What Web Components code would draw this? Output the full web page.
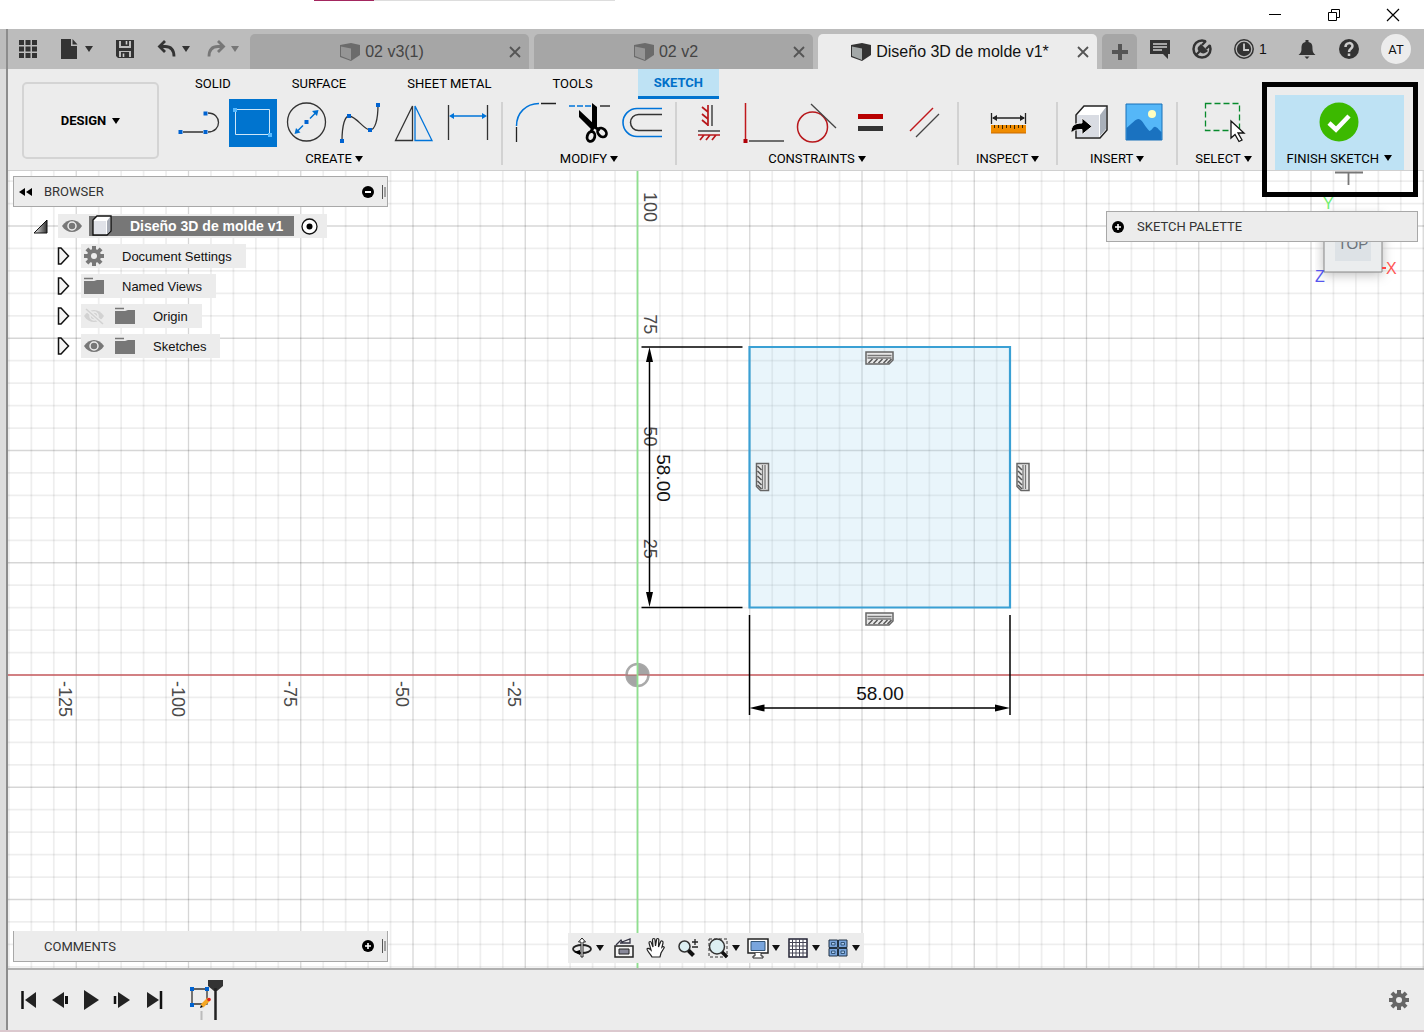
<!DOCTYPE html>
<html lang="en">
<head>
<meta charset="utf-8">
<title>Diseño 3D de molde v1</title>
<style>
    html, body { height: 100%; }
    body {
        margin: 0;
        font-family: "Liberation Sans", Arial, sans-serif;
        font-size: 13px;
        color: #111;
        overflow: hidden;
    }
</style>
</head>
<body>
<cad-app></cad-app>

<script>
const gear = c => `<g transform="translate(10 10)" fill="${c}">${[0, 45, 90, 135].map(a => `<rect x="-2" y="-10" width="4" height="20" transform="rotate(${a})"/>`).join("")}<circle r="7"/><circle r="3" fill="#ececec"/></g>`;
const sq = (x, y, c = "#0063d1") => `<rect x="${x - 2}" y="${y - 2}" width="4" height="4" fill="${c}"/>`;

// name: [viewBox width, viewBox height, markup]
const icons = {
    minimize: [12, 12, `<path d="M0 5.5h12" stroke="#000"/>`],
    restore: [12, 12, `<path d="M.5 3.5h8v8h-8zM3.5 3V.5h8v8H9" fill="none" stroke="#000"/>`],
    exit: [12, 12, `<path d="M0 0l12 12M12 0L0 12" stroke="#000" stroke-width="1.2"/>`],
    caret: [8, 6, `<path d="M0 0h8L4 6z" fill="currentColor"/>`],
    close: [12, 12, `<path d="M1 1l10 10M11 1L1 11" stroke="currentColor" stroke-width="1.8"/>`],
    apps: [20, 20, `<path fill="#333" d="M1 1h5v5H1zM7.5 1h5v5h-5zM14 1h5v5h-5zM1 7.500h5v5H1zM7.5 7.500h5v5h-5zM14 7.500h5v5h-5zM1 14h5v5H1zM7.5 14h5v5h-5zM14 14h5v5h-5z"/>`],
    file: [20, 20, `<path fill="#333" d="M1 0h10v7h6v13H1zM12.5 0l5 5.5h-5z"/>`],
    save: [20, 20, `<path fill="#333" fill-rule="evenodd" d="M1 1h18v18H3l-2-2zM4 2v7h12V2zM4 12v6h12v-6z"/><path fill="#333" d="M6 1h8v6H6zM6 13h8v6H6z"/><path stroke="#ccc" stroke-width="1.6" d="M11.500 2v3.500M8.500 14.500v3.500"/>`],
    undo: [20, 20, `<path d="M8 2L2.500 7.500 8 13M3 7.500h5c6 0 9 3 9 10" fill="none" stroke="#333" stroke-width="2.800"/>`],
    redo: [20, 20, `<path d="M12 2l5.500 5.500L12 13M17 7.500h-5c-6 0-9 3-9 10" fill="none" stroke="#777" stroke-width="2.800"/>`],
    doc: [20, 20, `<path d="M0 3l11-2 9 2v10l-9 6-11-4z" fill="currentColor"/><path d="M1 4.500l10 2V18L1 14z" fill="var(--face, #959595)"/>`],
    plus: [16, 16, `<path d="M8 0v16M0 8h16" stroke="#555" stroke-width="4"/>`],
    chat: [20, 20, `<path fill="#333" d="M0 1h20v14h-2v5l-5-5H0z"/><path d="M3 5h14M3 8h14M3 11h9" stroke="#ccc" stroke-width="1.5"/>`],
    plug: [20, 20, `<circle cx="10" cy="10" r="8.500" fill="none" stroke="#333" stroke-width="2.500"/><path d="M11 4l5-4 4 4-4 5z" fill="#bcbcbc"/><path d="M6 8l3-3 7 7c-3 3-6 3-8 1-2-1-3-3-2-5z" fill="#333"/><path d="M10 6l4-4M14 10l4-4M8 12l-4 4" stroke="#333" stroke-width="2.200"/>`],
    clock: [20, 20, `<circle cx="10" cy="10" r="9.200" fill="none" stroke="#333" stroke-width="1.500"/><circle cx="10" cy="10" r="7.200" fill="#333"/><path d="M10 4.500V11h5" fill="none" stroke="#ccc" stroke-width="1.800"/>`],
    bell: [20, 20, `<path fill="#333" d="M8.500 1h3v2c4 1 4 4 4 7s1 4 3 6H1.500c2-2 3-3 3-6s0-6 4-7zM7.500 17.500h5l-2.500 2.500z"/>`],
    help: [20, 20, `<circle cx="10" cy="10" r="10" fill="#333"/><path d="M6.500 8c0-5 7-5 7-1 0 3-3.500 2.500-3.500 6M10 14.500v2.500" fill="none" stroke="#ccc" stroke-width="2.500"/>`],

    line: [48, 48, `<path d="M8 33h20M33 33c14 0 14-19 0-19" fill="none" stroke="#333" stroke-width="1.300"/>${sq(5.5, 33)}${sq(30.5, 33)}${sq(30.5, 14.5)}`],
    rectangle: [48, 48, `<path fill="#0074cf" d="M0 0h48v48H0z"/><path d="M6.500 10.500h34v25h-34z" fill="none" stroke="#cfe6f7"/>${sq(6, 11, "#55b9ff")}${sq(41, 36, "#55b9ff")}`],
    circle: [48, 48, `<circle cx="23.500" cy="23" r="19" fill="none" stroke="#333" stroke-width="1.300"/><path d="M14 32.500l6-6M27 19.500l6-6" stroke="#0070d1" stroke-width="1.500"/><path d="M11.500 35l1.500-6 4.500 4.500zM35.500 11l-1.500 6-5-5z" fill="#0070d1"/>${sq(23.5, 23)}`],
    spline: [48, 48, `<path d="M5 42c0-16 3-25 7-25 7 0 15 14 21 14 5 0 8-10 8-25" fill="none" stroke="#333" stroke-width="1.300"/>${sq(5, 42)}${sq(12, 17)}${sq(33, 31)}${sq(41, 6)}`],
    mirror: [48, 48, `<path d="M21.500 7v34.500h-17z" fill="none" stroke="#333" stroke-width="1.300"/><path d="M24 7v34.500h17z" fill="none" stroke="#0074d9" stroke-width="1.300"/>`],
    dimension: [48, 48, `<path d="M3.500 6v35M42.500 6v35" stroke="#333" stroke-width="1.300"/><path d="M7 17h32" stroke="#0074d9" stroke-width="1.500"/><path d="M4 17l5-3v6zM42 17l-5-3v6z" fill="#0074d9"/>`],
    fillet: [48, 48, `<path d="M5.500 43V28M30 4.500h15" stroke="#222" stroke-width="1.300"/><path d="M5.500 27C5.500 14 15 4.500 28 4.500" fill="none" stroke="#0074d9" stroke-width="1.500"/>`],
    trim: [48, 48, `<path d="M4 7h22" stroke="#0074d9" stroke-width="1.500" stroke-dasharray="6 2"/><path d="M35 7h10" stroke="#333" stroke-width="1.500"/><path d="M14 11l16 15-2 6L14 18zM27 4l5 4v20l-5 2z"/><path d="M28 28l-2 5M29 28l6 3" stroke="#000" stroke-width="3"/><g fill="none" stroke="#000" stroke-width="2.800"><ellipse cx="26" cy="37.500" rx="3.800" ry="5" transform="rotate(15 26 37.500)"/><ellipse cx="37" cy="33.500" rx="3.800" ry="5" transform="rotate(-45 37 33.500)"/></g>`],
    offset: [48, 48, `<path d="M43 9.500H18a14 14 0 0 0 0 28h25" fill="none" stroke="#0074d9" stroke-width="1.600"/><path d="M43 15.500H19.500a8 8 0 0 0 0 16H43" fill="none" stroke="#333" stroke-width="1.500"/>`],
    horizVert: [48, 48, `<path d="M27 6v21M13 32h22" stroke="#444" stroke-width="1.500"/><path d="M23 6v21M23 13l-6-5M23 20l-6-5M23 26l-6-5M13 36h22M15 41l4-5M21 41l4-5M27 41l4-5" stroke="#b8181c" stroke-width="1.700"/>`],
    perpendicular: [48, 48, `<path d="M6.500 4v36" stroke="#c0181c" stroke-width="1.500"/><path d="M10 42h35" stroke="#444" stroke-width="1.300"/>${sq(6.5, 42, "#b00008")}`],
    tangent: [48, 48, `<circle cx="19.500" cy="28" r="15" fill="none" stroke="#b8181c" stroke-width="1.500"/><path d="M18 5l25 24" stroke="#444" stroke-width="1.300"/>`],
    equal: [48, 48, `<path d="M11 15h25v5H11z" fill="#b80000"/><path d="M11 27h25v5H11z" fill="#333"/>`],
    parallel: [48, 48, `<path d="M9 32L32 9" stroke="#c0181c" stroke-width="1.500"/><path d="M15 38l23-23" stroke="#444" stroke-width="1.300"/>`],
    measure: [48, 48, `<path d="M7.500 14v11M41.500 14v11M9 19h31" stroke="#222" stroke-width="1.300"/><path d="M8 19l5-3v6zM41 19l-5-3v6z" fill="#222"/><path d="M7 26h35v8H7z" fill="#f08c00"/><path d="M7 34h35" stroke="#c96a00"/><path d="M10.500 26v3M14.500 26v3M18.500 26v4M22.500 26v3M26.500 26v3M30.500 26v4M34.500 26v3M38.500 26v3" stroke="#3a2500"/>`],
    insert: [48, 48, `<path d="M10 16l8-9h23v24l-7 8H10z" fill="#fff" stroke="#222" stroke-width="1.500"/><path d="M11 16h22v22H11z" fill="#d9dce3"/><path d="M34 16l6-8v22l-6 7z" fill="#a9b0ba"/><path d="M5 34c0-7 3-10 11-10v-5l10 8.500-10 8v-5c-6 0-8 1-11 3.500z" stroke="#eee" stroke-width="1"/>`],
    image: [48, 48, `<path d="M6 5h36v36H6z" fill="#55b7f8" stroke="#1870b8"/><circle cx="32" cy="15" r="4" fill="#ffffc0"/><path d="M6.500 29c6-5 9-9 12-9 4 0 7 9 11 12 3-1 4-5 6-4 2 0 4 4 6 5v8h-35z" fill="#1a72c0"/>`],
    select: [48, 48, `<path d="M6.500 4.500h34v27h-34z" fill="none" stroke="#078a2c" stroke-width="1.300" stroke-dasharray="6 3"/><path d="M32 22v17l4-3.500 4 7 3-1.500-4-7h6z" fill="#fff" stroke="#111" stroke-width="1.300"/>`],
    finish: [48, 48, `<circle cx="24" cy="24" r="19.500" fill="#3cb900"/><path d="M14 25l7 6.500L34 18" fill="none" stroke="#fff" stroke-width="4.500"/>`],

    rewind: [13, 8, `<path d="M6 0v8L0 4zM13 0v8L7 4z"/>`],
    minusDot: [12, 12, `<circle cx="6" cy="6" r="6"/><path d="M3 6h6" stroke="#fff" stroke-width="2"/>`],
    plusDot: [12, 12, `<circle cx="6" cy="6" r="6"/><path d="M3 6h6M6 3v6" stroke="#fff" stroke-width="1.600"/>`],
    grip: [4, 14, `<path d="M.5 0v14M3 2v10" stroke="#555"/>`],
    open: [15, 15, `<defs><linearGradient id="g"><stop offset="0" stop-color="#eee"/><stop offset="1" stop-color="#333"/></linearGradient></defs><path d="M1 14L14 1v13z" fill="url(#g)" stroke="#111"/>`],
    closed: [13, 18, `<path d="M1.500 1H4l7.500 8L4 17H1.500z" fill="#f4f4f4" stroke="#111" stroke-width="1.500"/>`],
    eye: [20, 20, `<path d="M0 10c5-8 15-8 20 0-5 8-15 8-20 0z" fill="#777"/><circle cx="10" cy="10" r="4" fill="none" stroke="#ececec" stroke-width="1.500"/>`],
    eyeOff: [20, 20, `<path d="M0 10c5-8 15-8 20 0-5 8-15 8-20 0z" fill="#d2d2d2"/><circle cx="10" cy="10" r="4" fill="none" stroke="#ececec" stroke-width="1.500"/><path d="M2 3l17 15" stroke="#ececec" stroke-width="4"/><path d="M2 3l17 15" stroke="#d2d2d2" stroke-width="1.600"/>`],
    body: [20, 20, `<path d="M1 4l4-4h14v15l-4 4H1z" fill="#fff" stroke="#111" stroke-width="1.400"/><path d="M2 5h12v13H2z" fill="#e0e2e8"/><path d="M15 5l3-4v14l-3 3z" fill="#a6abb5"/>`],
    gear: [20, 20, gear("#777")],
    gearDark: [20, 20, gear("#666")],
    folder: [20, 20, `<path d="M0 5h10l3-1h7v14H0z" fill="#777"/><path d="M0 2.500h9" stroke="#777" stroke-width="1.500"/>`],
    target: [17, 17, `<circle cx="8.500" cy="8.500" r="7.500" fill="#fff" stroke="#111" stroke-width="1.300"/><circle cx="8.500" cy="8.500" r="3"/>`],

    orbit: [20, 20, `<ellipse cx="10" cy="11" rx="9" ry="4" fill="none" stroke="#222" stroke-width="1.800"/><path d="M10 0L6.500 4H9v15h2V4h2.500z" fill="#fff" stroke="#222"/><path d="M2 14l6-2v5z"/>`],
    look: [20, 20, `<path d="M1 8h18v11H1z" fill="#f4f4f4" stroke="#222" stroke-width="1.500"/><path d="M5 11h10v5H5z" fill="#889" stroke="#222"/><path d="M2 7l5-5 1 2 8-3v4H6" fill="none" stroke="#334" stroke-width="1.300"/>`],
    pan: [20, 20, `<path d="M6 19c-2-4-5-6-5-8 0-1 2-1 4 1L3 5c0-2 2-2 2.500 0L7 9 6.500 2c0-2 2.500-2 2.500 0l.5 6 1-6c0-2 2.500-2 2.300 0L12.500 9l2-5c.5-2 3-1 2.500 1l-1 4c1-1 3 0 2 1l-3 5-1 4z" fill="#fff" stroke="#222" stroke-width="1.200"/>`],
    zoom: [20, 20, `<circle cx="6.500" cy="8.500" r="5.500" fill="#dceff2" stroke="#333" stroke-width="1.500"/><path d="M10.500 12.500l5 5" stroke="#111" stroke-width="4"/><path d="M14 4h6M17 1v6M14 9h6" stroke="#222" stroke-width="1.300"/>`],
    fit: [20, 20, `<path d="M1 1h18v18H1z" fill="none" stroke="#333" stroke-dasharray="3 2"/><circle cx="9" cy="8.500" r="7.500" fill="#dceff2" stroke="#333" stroke-width="1.500"/><path d="M14 14l5 5" stroke="#111" stroke-width="3.500"/>`],
    display: [20, 20, `<path d="M0 1h20v14H0z" fill="#fff" stroke="#222" stroke-width="1.500"/><path d="M3 3.500h14v9H3z" fill="#79a5dd" stroke="#357"/><path d="M7 15v3H5v2h10v-2h-2v-3" fill="#fff" stroke="#222"/>`],
    gridset: [20, 20, `<path d="M1 1h18v18H1z" fill="#fff" stroke="#223" stroke-width="1.500"/><path d="M4.500 1v18M8 1v18M11.500 1v18M15 1v18M1 4.500h18M1 8h18M1 11.500h18M1 15h18" stroke="#445"/>`],
    views: [20, 20, `<path d="M1 2h8.500v7.500H1zM10.500 2H19v7.500h-8.500zM1 10.500h8.500V18H1zM10.500 10.500H19V18h-8.500z" fill="#79a5dd" stroke="#234"/><path d="M3.500 4.500h3.500v2.500H3.500zM13 4.500h3.500v2.500H13zM3.500 13h3.500v2.500H3.500zM13 13h3.500v2.500H13z" fill="#a9c8ee" stroke="#357"/>`],

    first: [20, 20, `<path d="M3.500 1v18" stroke="#111" stroke-width="2.500"/><path d="M17 2v16L6 10z" fill="#222"/>`],
    back: [20, 20, `<path d="M14 2v16L2 10z" fill="#222"/><path d="M16.500 6v8" stroke="#111" stroke-width="3"/>`],
    play: [20, 20, `<path d="M3 0v20l15-10z" fill="#222"/>`],
    forward: [20, 20, `<path d="M6 2v16l12-8z" fill="#222"/><path d="M3 6v8" stroke="#111" stroke-width="2.500"/>`],
    last: [20, 20, `<path d="M4 2v16l12-8z" fill="#222"/><path d="M18 1v18" stroke="#111" stroke-width="2.500"/>`],
    feature: [32, 44, `<path d="M6 11h15v15H6z" fill="none" stroke="#333" stroke-width="1.300"/>${sq(6, 11)}${sq(21, 11)}${sq(6, 27)}<path d="M16 28l7-7" stroke="#f5a623" stroke-width="4"/><path d="M14 30l3-1-2-2z"/><circle cx="23" cy="21.500" r="1.800" fill="#e02020"/><path d="M15.500 33v9" stroke="#bbb" stroke-width="2"/><path d="M22 2h15v6l-6 5h-3l-6-5z" fill="#333"/><path d="M29.500 10v32" stroke="#222" stroke-width="2.500"/>`],
};

// shared base: clones the class's template into an open shadow root
class CadElement extends HTMLElement {
    constructor() {
        super();
        this.attachShadow({mode: "open"});
    }
    connectedCallback() {
        const template = document.createElement("template");
        template.innerHTML = `<style>
            button { font: inherit; color: inherit; background: none; border: 0; padding: 0; margin: 0; display: flex; align-items: center; }
            ${this.constructor.css}</style>${this.render()}`;
        this.shadowRoot.replaceChildren(template.content.cloneNode(true));
    }
    attr(name, fallback = "") { return this.getAttribute(name) || fallback; }
}

class CadIcon extends CadElement {
    static css = `:host { display: inline-flex; flex: none; } svg { display: block; overflow: visible; }`;
    render() {
        const [w, h, body] = icons[this.attr("name")];
        return `<svg width="${w}" height="${h}" viewBox="0 0 ${w} ${h}" aria-hidden="true">${body}</svg>`;
    }
}
customElements.define("cad-icon", CadIcon);

class IconButton extends CadElement {
    static css = `
        :host { display: inline-flex; flex: none; }
        button { gap: var(--caret-gap, 5px); }
        :host([faded]) { color: #777; }
    `;
    render() {
        return `<button aria-label="${this.attr("label")}"><cad-icon name="${this.attr("icon")}"></cad-icon>${this.hasAttribute("menu") ? `<cad-icon name="caret"></cad-icon>` : ""}<slot></slot></button>`;
    }
}
customElements.define("icon-button", IconButton);

class WindowBar extends CadElement {
    static css = `
        :host { display: flex; justify-content: flex-end; align-items: center; height: 29px; background: #fff; position: relative; padding-right: 25px; gap: 47px; box-sizing: border-box; }
        .progress { position: absolute; left: 314px; top: 0; width: 301px; height: 1px; background: linear-gradient(to right, #a3265e 60px, #ddd 60px); }
    `;
    render() {
        return `<div class="progress"></div>
            <icon-button label="Minimize" icon="minimize"></icon-button>
            <icon-button label="Restore" icon="restore"></icon-button>
            <icon-button label="Close window" icon="exit"></icon-button>`;
    }
}
customElements.define("window-bar", WindowBar);

class DocumentTab extends CadElement {
    static css = `
        :host { display: flex; flex: 1; align-items: center; height: 35px; padding: 0 8px 0 5px; box-sizing: border-box; border-radius: 5px 5px 0 0; background: #a6a6a6; color: #444; min-width: 0; }
        :host([active]) { background: #ececec; color: #111; --face: #a3a8a8; }
        cad-icon { color: #6b6b6b; }
        :host([active]) cad-icon { color: #333; }
        .name { flex: 1; justify-content: center; gap: 5px; font-size: 16px; line-height: 20px; white-space: nowrap; }
        icon-button { color: #555; }
    `;
    render() {
        return `<button class="name"><cad-icon name="doc"></cad-icon><slot></slot></button>
            <icon-button label="Close tab" icon="close"></icon-button>`;
    }
}
customElements.define("document-tab", DocumentTab);

class AppBar extends CadElement {
    static css = `
        :host { display: flex; align-items: center; height: 40px; background: #bcbcbc; }
        .quick { display: flex; gap: 22px; padding: 0 11px 0 10px; color: #333; }
        .history { display: flex; gap: 16px; }
        .tabs { display: flex; flex: 1; gap: 5px; align-self: flex-end; min-width: 0; }
        .add { width: 35px; height: 35px; justify-content: center; background: #a6a6a6; border-radius: 5px 5px 0 0; }
        .status { display: flex; align-items: center; gap: 22px; padding: 0 13px; }
        .jobs { width: 41px; font-size: 14px; }
        .avatar { width: 30px; height: 30px; border-radius: 50%; background: #ececec; justify-content: center; font: 13px Roboto, sans-serif; }
    `;
    render() {
        return `<div class="quick">
                <icon-button label="Data panel" icon="apps"></icon-button>
                <icon-button label="File" icon="file" menu></icon-button>
                <icon-button label="Save" icon="save"></icon-button>
                <div class="history">
                    <icon-button label="Undo" icon="undo" menu></icon-button>
                    <icon-button label="Redo" icon="redo" menu faded></icon-button>
                </div>
            </div>
            <div class="tabs">
                <document-tab>02 v3(1)</document-tab>
                <document-tab>02 v2</document-tab>
                <document-tab active>Diseño 3D de molde v1*</document-tab>
                <button class="add" aria-label="New tab"><cad-icon name="plus"></cad-icon></button>
            </div>
            <div class="status">
                <icon-button label="Comments" icon="chat"></icon-button>
                <icon-button label="Extensions" icon="plug"></icon-button>
                <icon-button class="jobs" label="Job status" icon="clock">1</icon-button>
                <icon-button label="Notifications" icon="bell"></icon-button>
                <icon-button label="Help" icon="help"></icon-button>
                <button class="avatar">AT</button>
            </div>`;
    }
}
customElements.define("app-bar", AppBar);

class ToolGroup extends CadElement {
    static css = `
        :host { display: flex; flex-direction: column; align-items: center; padding: 0 5px; position: relative; }
        :host([roomy]) { padding: 0 17px; }
        :host(:not([last]))::after { content: ""; position: absolute; right: -2px; top: 3px; bottom: 6px; width: 2px; background: #d2d2d2; }
        :host(:not([last])) { margin-right: 2px; }
        .tools { display: flex; }
        .tools icon-button { width: 54px; justify-content: center; }
        .label { gap: 3px; height: 24px; line-height: 24px; white-space: nowrap; }
    `;
    render() {
        const tools = this.attr("tools").split(" ");
        return `<div class="tools">${tools.map(t => `<icon-button icon="${t}" label="${t}"></icon-button>`).join("")}</div>
            <button class="label"><slot></slot><cad-icon name="caret"></cad-icon></button>`;
    }
}
customElements.define("tool-group", ToolGroup);

class RibbonBar extends CadElement {
    static css = `
        :host { display: flex; height: 102px; background: #ececec; font-family: Roboto, sans-serif; color: #000; border-bottom: 1px solid #d0d0d0; box-sizing: border-box; }
        .workspace { width: 137px; height: 77px; margin: 13px 8px 0 14px; border: 2px solid #d4d4d4; border-radius: 5px; justify-content: center; gap: 6px; font-weight: bold; box-sizing: border-box; }
        .middle { flex: 1; }
        .tabs { display: flex; gap: 29px; padding-left: 12px; height: 30px; }
        .tabs button { padding: 0 16px; height: 28px; white-space: nowrap; }
        .tabs .active { background: #bee2f4; color: #0070c9; font-weight: bold; border-bottom: 3px solid #0074cf; height: 30px; }
        .groups { display: flex; }
        .finish { position: relative; align-self: flex-end; flex-direction: column; margin-right: 20px; padding: 3px 12px 0; background: #bee2f4; z-index: 3; }
        .finish .label { display: flex; align-items: center; gap: 5px; height: 24px; white-space: nowrap; }
        .callout { position: absolute; inset: -13px -14px -27px -13px; border: 5px solid #000; pointer-events: none; }
    `;
    render() {
        return `<button class="workspace">DESIGN <cad-icon name="caret"></cad-icon></button>
            <div class="middle">
                <div class="tabs">
                    <button>SOLID</button>
                    <button>SURFACE</button>
                    <button>SHEET METAL</button>
                    <button>TOOLS</button>
                    <button class="active">SKETCH</button>
                </div>
                <div class="groups">
                    <tool-group tools="line rectangle circle spline mirror dimension">CREATE</tool-group>
                    <tool-group tools="fillet trim offset">MODIFY</tool-group>
                    <tool-group tools="horizVert perpendicular tangent equal parallel">CONSTRAINTS</tool-group>
                    <tool-group tools="measure" roomy>INSPECT</tool-group>
                    <tool-group tools="insert image">INSERT</tool-group>
                    <tool-group tools="select" roomy last>SELECT</tool-group>
                </div>
            </div>
            <button class="finish"><cad-icon name="finish"></cad-icon><span class="label">FINISH SKETCH <cad-icon name="caret"></cad-icon></span><span class="callout"></span></button>`;
    }
}
customElements.define("ribbon-bar", RibbonBar);

class PanelHeader extends CadElement {
    static css = `
        :host { display: flex; align-items: center; height: 31px; box-sizing: border-box; background: #ececec; border: 1px solid #a8a8a8; padding: 0 1px 0 5px; font-family: Roboto, sans-serif; color: #333; }
        .lead { display: flex; width: 25px; }
        .title { flex: 1; }
        .end { display: flex; align-items: center; gap: 8px; }
    `;
    render() {
        const toggle = `<icon-button label="Toggle" icon="${this.attr("toggle")}"></icon-button>`;
        if (this.hasAttribute("leading")) {
            return `<div class="lead">${toggle}</div><span class="title"><slot></slot></span>`;
        }
        return `<div class="lead">${this.hasAttribute("collapsible") ? `<icon-button label="Collapse" icon="rewind"></icon-button>` : ""}</div>
            <span class="title"><slot></slot></span>
            <div class="end">${toggle}<cad-icon name="grip"></cad-icon></div>`;
    }
}
customElements.define("panel-header", PanelHeader);

class TreeRow extends CadElement {
    static css = `
        :host { display: flex; align-items: center; height: 24px; padding-left: 44px; gap: 11px; }
        :host([root]) { padding-left: 20px; gap: 10px; }
        .box { display: flex; align-items: center; height: 24px; background: #ececec; padding: 0 14px 0 3px; gap: 11px; }
        .text { padding-left: 7px; }
        :host([root]) .box { padding: 0 9px 0 4px; gap: 7px; }
        .name { display: flex; align-items: center; height: 20px; background: #777; color: #fff; font-size: 14px; font-weight: bold; padding: 0 11px 0 3px; gap: 18px; }
    `;
    render() {
        if (this.hasAttribute("root")) {
            return `<icon-button label="Collapse" icon="open"></icon-button>
                <div class="box"><icon-button label="Visibility" icon="eye"></icon-button><span class="name"><cad-icon name="body"></cad-icon><slot></slot></span><icon-button label="Activate" icon="target"></icon-button></div>`;
        }
        return `<icon-button label="Expand" icon="closed"></icon-button>
            <div class="box">${this.attr("icons").split(" ").map(i => `<cad-icon name="${i}"></cad-icon>`).join("")}<span class="text"><slot></slot></span></div>`;
    }
}
customElements.define("tree-row", TreeRow);

class SketchCanvas extends CadElement {
    static css = `
        :host { display: block; }
        svg { display: block; width: 100%; height: 100%; }
        text { font: 19px "Liberation Sans", Arial, sans-serif; fill: #111; }
        .tick { font-size: 18px; fill: #4a4a4a; }
        .minor { stroke: #000; stroke-opacity: .065; stroke-width: 1.8; }
        .major { stroke: #000; stroke-opacity: .16; stroke-width: 1.3; }
    `;
    render() {
        // one grid cell is 5 mm
        const step = 22.45;
        let grid = "";
        for (let i = -28; i <= 120; i++) {
            grid += `<path class="${i % 5 ? "minor" : "major"}" d="M${i * step} -504V2000"/>`;
        }
        for (let i = -22; i <= 80; i++) {
            grid += `<path class="${i % 5 ? "minor" : "major"}" d="M-640 ${i * step}H3000"/>`;
        }
        const xTicks = [-125, -100, -75, -50, -25].map(v => `<text class="tick" transform="translate(${v / 5 * step - 17} 6) rotate(90)">${v}</text>`).join("");
        const yTicks = [25, 50, 75, 100].map(v => `<text class="tick" text-anchor="end" transform="translate(6 ${-v / 5 * step - 4}) rotate(90)">${v}</text>`).join("");
        return `<svg>
            <defs><g id="fixed">
                <path d="M-13.500-6h27v8l-4 4h-23z" fill="#e8e8e8" stroke="#666" stroke-width="1.500"/>
                <path d="M-12-2.500h24M-12 0h24" stroke="#777" stroke-width="1.300"/>
                <path d="M-11 5l4-4M-6 5l4-4M-1 5l4-4M4 5l4-4M8 5l4-4" stroke="#555" stroke-width="1.500"/>
            </g></defs>
            <g transform="translate(629.5 504)">
                ${grid}
                <path d="M-640 0H3000" stroke="#cc5f63" stroke-width="1.500"/>
                <circle r="11" fill="#fff" stroke="#aaa" stroke-width="2.500"/>
                <path d="M0 0V-11A11 11 0 0 1 11 0zM0 0V11A11 11 0 0 1-11 0z" fill="#a5a5a5"/>
                <path d="M-12 0h24" stroke="#b05a5a"/>
                <path d="M0-504V2000" stroke="#8fe08f" stroke-width="1.800"/>
                <path d="M112-328h260.500v260.500H112z" fill="#9bd3ee" fill-opacity=".22" stroke="#3aa0d4" stroke-width="2.200"/>
                <use href="#fixed" x="242" y="-317"/><use href="#fixed" x="242" y="-56"/>
                <use href="#fixed" transform="translate(125 -198) rotate(90)"/><use href="#fixed" transform="translate(385.500 -198) rotate(90)"/>
                ${xTicks}${yTicks}
                <path d="M4-328h101M4-67.500h101M12-320v245M112-60V40M372.500-60V40M120 33h245" stroke="#000" stroke-width="1.500"/>
                <path d="M12-328l-3.500 15h7zM12-68l-3.500-15h7zM112 33l15-3.500v7zM372.500 33l-15-3.500v7z"/>
                <text x="242.500" y="25" text-anchor="middle">58.00</text>
                <text text-anchor="middle" transform="translate(19 -197) rotate(90)">58.00</text>
            </g></svg>`;
    }
}
customElements.define("sketch-canvas", SketchCanvas);

class ViewCube extends CadElement {
    static css = `:host { display: block; } svg { display: block; } text { font: 16px "Liberation Sans", Arial, sans-serif; }`;
    render() {
        return `<svg width="100" height="120">
            <path d="M20 1.500h28M33.500 1v13" stroke="#777" stroke-width="1.800"/>
            <g style="filter: drop-shadow(0 2px 6px #bbb)"><path d="M9 44h58v57H9z" fill="#ebedee" stroke="#888"/></g>
            <path d="M20 55h36v35H20z" fill="#dde2e6"/>
            <text x="38" y="78" text-anchor="middle" style="font-size: 15px" fill="#6b737b">TOP</text>
            <text x="8" y="38" fill="#6fee6f">Y</text>
            <text x="71" y="103" fill="#f55">X</text><path d="M67 97h4" stroke="#f44" stroke-width="2"/>
            <text x="0" y="111" fill="#55e">Z</text>
        </svg>`;
    }
}
customElements.define("view-cube", ViewCube);

class NavBar extends CadElement {
    static css = `
        :host { display: flex; gap: 8px; align-items: center; height: 30px; padding: 0 4px; background: #ececec; --caret-gap: 4px; }
        icon-button:not([menu]) { padding: 0 2px; }
    `;
    render() {
        return `<icon-button label="Orbit" icon="orbit" menu></icon-button>
            <icon-button label="Look at" icon="look"></icon-button>
            <icon-button label="Pan" icon="pan"></icon-button>
            <icon-button label="Zoom" icon="zoom"></icon-button>
            <icon-button label="Fit" icon="fit" menu></icon-button>
            <icon-button label="Display settings" icon="display" menu></icon-button>
            <icon-button label="Grid and snaps" icon="gridset" menu></icon-button>
            <icon-button label="Viewports" icon="views" menu></icon-button>`;
    }
}
customElements.define("nav-bar", NavBar);

class TimelineBar extends CadElement {
    static css = `
        :host { display: flex; align-items: center; height: 62px; box-sizing: border-box; background: #ececec; border-top: 2px solid #b0b0b0; padding: 0 15px 0 11px; }
        .player { display: flex; gap: 11px; }
        .feature { flex: 1; display: flex; padding-left: 23px; }
    `;
    render() {
        return `<div class="player">
                <icon-button label="Go to start" icon="first"></icon-button>
                <icon-button label="Step back" icon="back"></icon-button>
                <icon-button label="Play" icon="play"></icon-button>
                <icon-button label="Step forward" icon="forward"></icon-button>
                <icon-button label="Go to end" icon="last"></icon-button>
            </div>
            <div class="feature"><icon-button label="Sketch 1" icon="feature"></icon-button></div>
            <icon-button label="Timeline settings" icon="gearDark"></icon-button>`;
    }
}
customElements.define("timeline-bar", TimelineBar);

class CadApp extends CadElement {
    static css = `
        :host { display: flex; flex-direction: column; height: 100vh; }
        .frame { display: flex; flex: 1; min-height: 0; }
        .gutter { width: 6px; background: linear-gradient(#bcbcbc 40px, #dcdcdc 40px); }
        .main { display: flex; flex-direction: column; flex: 1; min-width: 0; border-left: 2px solid #8c8c8c; }
        ribbon-bar { position: relative; z-index: 2; }
        .viewport { position: relative; flex: 1; min-height: 0; background: #fff; overflow: hidden; }
        sketch-canvas { position: absolute; inset: 0; }
        .browser { position: absolute; left: 5px; top: 5px; width: 375px; }
        .tree { display: flex; flex-direction: column; gap: 6px; margin-top: 7px; }
        .comments { position: absolute; left: 5px; bottom: 6px; width: 375px; border-top: 0; }
        .palette { position: absolute; right: 6px; top: 40px; width: 312px; }
        view-cube { position: absolute; right: 9px; top: 0; }
        nav-bar { position: absolute; bottom: 5px; left: 50%; transform: translateX(-50%); }
        .edge { height: 2px; background: #dbc8ce; }
    `;
    render() {
        return `<window-bar></window-bar>
            <div class="frame">
                <div class="gutter"></div>
                <div class="main">
                    <app-bar></app-bar>
                    <ribbon-bar></ribbon-bar>
                    <div class="viewport">
                        <sketch-canvas></sketch-canvas>
                        <view-cube></view-cube>
                        <div class="browser">
                            <panel-header toggle="minusDot" collapsible>BROWSER</panel-header>
                            <div class="tree">
                                <tree-row root>Diseño 3D de molde v1</tree-row>
                                <tree-row icons="gear">Document Settings</tree-row>
                                <tree-row icons="folder">Named Views</tree-row>
                                <tree-row icons="eyeOff folder">Origin</tree-row>
                                <tree-row icons="eye folder">Sketches</tree-row>
                            </div>
                        </div>
                        <panel-header class="palette" toggle="plusDot" leading>SKETCH PALETTE</panel-header>
                        <panel-header class="comments" toggle="plusDot">COMMENTS</panel-header>
                        <nav-bar></nav-bar>
                    </div>
                    <timeline-bar></timeline-bar>
                </div>
            </div>
            <div class="edge"></div>`;
    }
}
customElements.define("cad-app", CadApp);
</script>
</body>
</html>
